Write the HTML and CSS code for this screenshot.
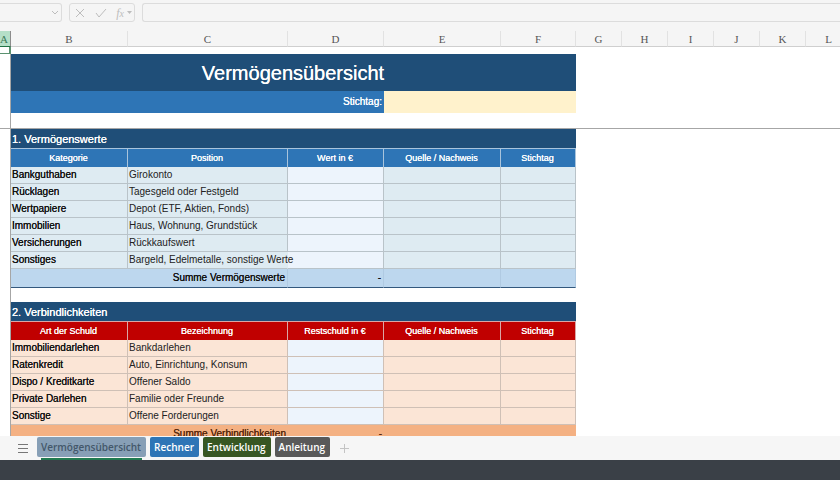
FILE: index.html
```html
<!DOCTYPE html>
<html lang="de">
<head>
<meta charset="utf-8">
<meta name="viewport" content="width=device-width, initial-scale=1">
<title>Vermögensübersicht</title>
<link rel="stylesheet" href="styles.css">
</head>
<body>
<header class="formula-bar">
  <button class="name-box" type="button" aria-label="Namenfeld">
    <svg width="8" height="5" viewBox="0 0 8 5"><path d="M1 1l3 3 3-3"/></svg>
  </button>
  <div class="fx-group">
    <button type="button" aria-label="Abbrechen"><svg width="10" height="10" viewBox="0 0 10 10"><path d="M1 1l8 8M9 1l-8 8"/></svg></button>
    <button type="button" aria-label="Eingeben"><svg width="12" height="10" viewBox="0 0 12 10"><path d="M1 5l3 4 7-8"/></svg></button>
    <button type="button" class="fx" aria-label="Funktion einfügen"><i>f</i><sub>x</sub><svg width="5" height="3" viewBox="0 0 5 3"><path class="solid" d="M0 0h5L2.500 3z"/></svg></button>
  </div>
  <input class="formula" type="text" aria-label="Bearbeitungsleiste">
</header>

<main class="sheet">
<table class="grid">
  <colgroup><col class="a"><col class="b"><col class="c"><col class="d"><col class="e"><col class="f"><col class="w"><col class="w"><col class="w"><col class="w"><col class="w"><col class="w"></colgroup>
  <thead>
    <tr class="letters"><th class="active"><span>A</span></th><th>B</th><th>C</th><th>D</th><th>E</th><th>F</th><th>G</th><th>H</th><th>I</th><th>J</th><th>K</th><th>L</th></tr>
  </thead>
  <tbody>
    <tr class="first"><td class="edge cursor"></td><td colspan="11"></td></tr>
    <tr class="title"><td class="edge"></td><th colspan="5">Vermögensübersicht</th></tr>
    <tr class="date"><td class="edge"></td><th colspan="3">Stichtag:</th><td class="entry" colspan="2"></td></tr>
    <tr class="freeze"><td class="edge"></td><td colspan="11"></td></tr>
  </tbody>
  <tbody class="assets">
    <tr class="section"><td class="edge"></td><th colspan="5">1. Vermögenswerte</th></tr>
    <tr class="heads"><td class="edge"></td><th>Kategorie</th><th>Position</th><th>Wert in €</th><th>Quelle / Nachweis</th><th>Stichtag</th></tr>
    <tr class="row"><td class="edge"></td><th>Bankguthaben</th><td>Girokonto</td><td class="value"></td><td></td><td></td></tr>
    <tr class="row"><td class="edge"></td><th>Rücklagen</th><td>Tagesgeld oder Festgeld</td><td class="value"></td><td></td><td></td></tr>
    <tr class="row"><td class="edge"></td><th>Wertpapiere</th><td>Depot (ETF, Aktien, Fonds)</td><td class="value"></td><td></td><td></td></tr>
    <tr class="row"><td class="edge"></td><th>Immobilien</th><td>Haus, Wohnung, Grundstück</td><td class="value"></td><td></td><td></td></tr>
    <tr class="row"><td class="edge"></td><th>Versicherungen</th><td>Rückkaufswert</td><td class="value"></td><td></td><td></td></tr>
    <tr class="row"><td class="edge"></td><th>Sonstiges</th><td class="overflow"><span>Bargeld, Edelmetalle, sonstige Werte</span></td><td class="value"></td><td></td><td></td></tr>
    <tr class="sum"><td class="edge"></td><th colspan="2">Summe Vermögenswerte</th><td>-</td><td></td><td></td></tr>
  </tbody>
  <tbody>
    <tr class="gap"><td class="edge"></td><td colspan="11"></td></tr>
  </tbody>
  <tbody class="debts">
    <tr class="section"><td class="edge"></td><th colspan="5">2. Verbindlichkeiten</th></tr>
    <tr class="heads"><td class="edge"></td><th>Art der Schuld</th><th>Bezeichnung</th><th>Restschuld in €</th><th>Quelle / Nachweis</th><th>Stichtag</th></tr>
    <tr class="row"><td class="edge"></td><th>Immobiliendarlehen</th><td>Bankdarlehen</td><td class="value"></td><td></td><td></td></tr>
    <tr class="row"><td class="edge"></td><th>Ratenkredit</th><td>Auto, Einrichtung, Konsum</td><td class="value"></td><td></td><td></td></tr>
    <tr class="row"><td class="edge"></td><th>Dispo / Kreditkarte</th><td>Offener Saldo</td><td class="value"></td><td></td><td></td></tr>
    <tr class="row"><td class="edge"></td><th>Private Darlehen</th><td>Familie oder Freunde</td><td class="value"></td><td></td><td></td></tr>
    <tr class="row"><td class="edge"></td><th>Sonstige</th><td>Offene Forderungen</td><td class="value"></td><td></td><td></td></tr>
    <tr class="sum"><td class="edge"></td><th colspan="2">Summe Verbindlichkeiten</th><td>-</td><td></td><td></td></tr>
  </tbody>
</table>
</main>

<nav class="tabs" aria-label="Tabellenblätter">
  <button class="menu" type="button" aria-label="Alle Blätter"><svg width="10" height="9" viewBox="0 0 10 9"><path d="M0 .5h10M0 4.500h10M0 8.500h10"/></svg></button>
  <button class="tab current" type="button">Vermögensübersicht</button>
  <button class="tab blue" type="button">Rechner</button>
  <button class="tab green" type="button">Entwicklung</button>
  <button class="tab gray" type="button">Anleitung</button>
  <button class="add" type="button" aria-label="Neues Blatt"><svg width="9" height="9" viewBox="0 0 9 9"><path d="M4.500 0v9M0 4.500h9"/></svg></button>
</nav>
<footer class="status"></footer>
</body>
</html>
```
FILE: styles.css
```css
* { box-sizing: border-box; }

body {
  margin: 0;
  height: 100vh;
  display: flex;
  flex-direction: column;
  overflow: hidden;
  background: #fff;
  font: 10px/14px "Liberation Sans", Arial, sans-serif;
  color: #222;
}

button {
  margin: 0;
  padding: 0;
  border: 0;
  background: none;
  font: inherit;
  color: inherit;
}

svg { display: block; fill: none; stroke: currentColor; }
.solid { fill: currentColor; stroke: none; }

/* Formula bar */
.formula-bar {
  display: flex;
  gap: 7px;
  flex: none;
  padding: 3px 0 9px;
  background: #f5f5f5;
  color: #bdbdbd;
}

.name-box,
.fx-group,
.formula {
  height: 19px;
  border: 1px solid #dcdcdc;
  border-radius: 3px;
  background: #f5f5f5;
}

.name-box {
  display: flex;
  align-items: center;
  justify-content: flex-end;
  width: 62px;
  padding-right: 2px;
  border-left: 0;
  border-radius: 0 3px 3px 0;
}

.fx-group {
  display: flex;
  align-items: center;
  justify-content: space-between;
  width: 66px;
  padding: 0 2px 0 5px;
}

.fx {
  display: flex;
  align-items: center;
  font: 12px/14px "Liberation Serif", serif;
}

.fx sub {
  padding: 2px 3px 0 0;
  font-size: 10px;
  font-style: italic;
  line-height: 14px;
  vertical-align: baseline;
}

.formula {
  flex: 1;
  min-width: 0;
  border-right: 0;
  border-radius: 3px 0 0 3px;
}

/* Sheet */
.sheet {
  flex: 1;
  min-height: 0;
  overflow: hidden;
}

.grid {
  table-layout: fixed;
  width: 852px;
  border-collapse: separate;
  border-spacing: 0;
}

.a { width: 11px; }
.b, .e { width: 117px; }
.c { width: 160px; }
.d { width: 96px; }
.f { width: 75px; }
.w { width: 46px; }

.grid th,
.grid td {
  padding: 0 2px 0 1px;
  font-weight: 400;
  text-align: left;
  white-space: nowrap;
}

.grid .edge { padding: 0; border: 0; border-right: 1px solid #a6a6a6; background: #fff; }

.grid .letters th {
  height: 16px;
  padding: 2px 0 0;
  border-right: 1px solid #e2e2e2;
  border-bottom: 1px solid #cfcfcf;
  background: #f5f5f5;
  font: 11px/13px "Liberation Serif", serif;
  text-align: center;
  color: #555;
}

.grid .letters .active {
  border-right-color: #8c8c8c;
  border-bottom-color: #217346;
  background: #b5dfc8;
  color: #3c7a58;
  text-align: left;
}

.first td { height: 7px; }
.grid .cursor { border-right: 2px solid #5b9270; border-bottom: 1px solid #5b9270; }

.grid .title th {
  height: 37px;
  background: #1f4e78;
  color: #fff;
  font-size: 20px;
  line-height: 24px;
  text-align: center;
  text-shadow: 0 0 0 #fff;
}

.grid .date th {
  height: 22px;
  background: #2e75b6;
  color: #fff;
  text-align: right;
  text-shadow: 0 0 0 #fff;
}

.grid .entry { background: #fff2cc; }

.freeze td { height: 16px; }
.grid .freeze td { border-bottom: 1px solid #a6a6a6; }
.gap td { height: 14px; }

.grid .section th {
  height: 19px;
  background: #1f4e78;
  color: #fff;
  font-size: 11px;
  text-shadow: 0 0 0 #fff;
}

.grid .heads th {
  height: 19px;
  border: 1px solid #a9c4dc;
  border-width: 1px 1px 0 0;
  background: #2e75b6;
  color: #fff;
  font-size: 9px;
  text-align: center;
  text-shadow: 0 0 0 #fff;
}

.grid .heads .edge { border: 0; }

.grid.grid .debts .heads th { background: #c00000; border-color: #d9a6a6; }

.row th,
.row td {
  height: 17px;
  border: 1px solid #b9c3c9;
  border-width: 0 1px 1px 0;
  background: #deebf2;
}

.row th,
.sum th,
.sum td { color: #111; text-shadow: 0 0 0 #111; }

.debts .row th,
.debts .row td { background: #fbe5d6; border-color: #cfc0b6; }

.grid .row .value { background: #edf4fc; }
.grid .row .edge { background: #fff; border-width: 0 1px 0 0; border-color: #a6a6a6; }
.grid .heads .edge { border-right: 1px solid #a6a6a6; }

.row .overflow { border-right-color: transparent; }
.overflow span { position: relative; }

.assets .sum th,
.assets .sum td {
  height: 19px;
  border-right: 1px solid #b0cae2;
  border-bottom: 1px solid #33587d;
  background: #bdd7ee;
}

.debts .sum th,
.debts .sum td { height: 18px; background: #f4b183; color: #59290c; text-shadow: 0 0 0 #59290c; }

.grid .sum th,
.grid .sum td { text-align: right; }
.grid .sum .edge { background: #fff; border-bottom: 0; border-right-color: #a6a6a6; }

/* Sheet tabs */
.tabs {
  display: flex;
  align-items: flex-start;
  gap: 4px;
  flex: none;
  height: 24px;
  padding: 1px 0 0 18px;
  background: #f6f6f6;
  font: 600 10px/20px "Open Sans", "Noto Sans", sans-serif;
}

.menu { align-self: center; margin-right: 5px; color: #777; }

.tab {
  position: relative;
  height: 20px;
  padding: 0 5px 0 4px;
  border-radius: 2px;
  color: #fff;
}

.current { background: #879fb6; color: #43576a; }

.current::after {
  content: "";
  position: absolute;
  right: 4px;
  bottom: -3px;
  left: 4px;
  height: 2px;
  background: #217a50;
}

.blue { background: #2e75b6; }
.green { background: #375623; }
.gray { background: #595959; }
.add { align-self: center; margin-left: 6px; color: #c4c4c4; }

.status { flex: none; height: 20px; background: #3a4047; }
```
